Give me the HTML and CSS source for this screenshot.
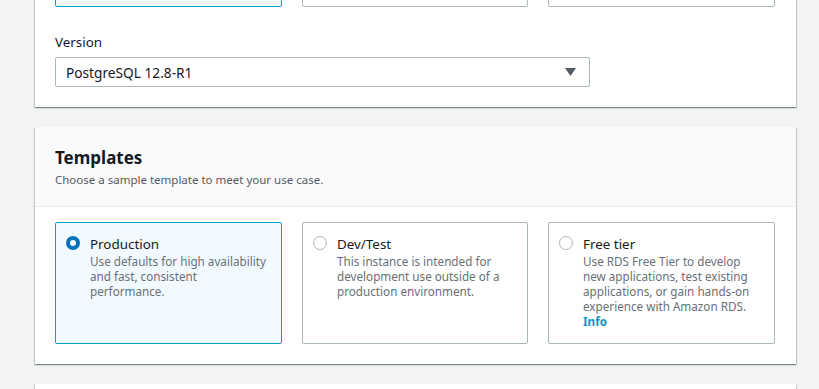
FILE: index.html
```html
<!DOCTYPE html>
<html>
<head>
<meta charset="utf-8">
<link rel="stylesheet" href="styles.css">
</head>
<body>
<div class="page">
  <section class="panel panel-top">
    <div class="tiles">
      <div class="tile selected"></div>
      <div class="tile"></div>
      <div class="tile"></div>
    </div>
    <label class="field-label">Version</label>
    <div class="select">
      <span>PostgreSQL 12.8-R1</span>
      <svg class="caret" width="11" height="8" viewBox="0 0 11 8"><path d="M0 0 H11 L5.5 8 Z" fill="#545b64"/></svg>
    </div>
  </section>

  <section class="panel">
    <header class="panel-header">
      <h2>Templates</h2>
      <p>Choose a sample template to meet your use case.</p>
    </header>
    <div class="panel-body">
      <div class="tiles">
        <div class="tile selected option">
          <span class="radio checked"></span>
          <div class="option-text">
            <div class="option-title">Production</div>
            <div class="option-desc">Use defaults for high availability and fast, consistent performance.</div>
          </div>
        </div>
        <div class="tile option">
          <span class="radio"></span>
          <div class="option-text">
            <div class="option-title">Dev/Test</div>
            <div class="option-desc">This instance is intended for development use outside of a production environment.</div>
          </div>
        </div>
        <div class="tile option">
          <span class="radio"></span>
          <div class="option-text">
            <div class="option-title">Free tier</div>
            <div class="option-desc">Use RDS Free Tier to develop new applications, test existing applications, or gain hands-on experience with Amazon RDS. <a class="info">Info</a></div>
          </div>
        </div>
      </div>
    </div>
  </section>

  <section class="panel panel-next"></section>
</div>
</body>
</html>
```

FILE: styles.css
```css
* { box-sizing: border-box; }
html, body { margin: 0; padding: 0; }
body {
  background: #f2f3f3;
  font-family: "Noto Sans", "Open Sans", Arial, sans-serif;
  color: #16191f;
  overflow: hidden;
  height: 389px;
}
.page {
  width: 761px;
  margin-left: 35px;
  display: flex;
  flex-direction: column;
  gap: 20px;
}
.panel {
  background: #fff;
  box-shadow: 0 1px 1px 0 rgba(0,28,36,.3), 1px 1px 1px 0 rgba(0,28,36,.15), -1px 1px 1px 0 rgba(0,28,36,.15);
}
.panel-top {
  margin-top: -113px;
  padding: 0 21px 20px 20px;
}
.tiles {
  display: grid;
  grid-template-columns: 227px 226px 227px;
  column-gap: 20px;
  justify-content: space-between;
}
.panel-top .tiles .tile { height: 120px; }
.tile {
  border: 1px solid #aab7b8;
  border-radius: 2px;
  background: #fff;
}
.tile.selected {
  border-color: #00a1c9;
  background: #f1faff;
}
.field-label {
  display: block;
  margin-top: 25px;
  font-size: 13.4px;
  line-height: 20px;
  color: #16191f;
}
.select {
  margin-top: 5px;
  width: 535px;
  height: 30px;
  border: 1px solid #aab7b8;
  border-radius: 2px;
  display: flex;
  align-items: center;
  justify-content: space-between;
  padding: 0 13px 0 10px;
  font-size: 13.7px;
}
.caret { display: block; }
.panel-header {
  background: #fafafa;
  border-bottom: 1px solid #eaeded;
  padding: 19px 20px 18px;
}
.panel-header h2 {
  margin: 0;
  font-size: 17px;
  line-height: 24px;
  font-weight: 700;
}
.panel-header p {
  margin: 1px 0 0;
  font-size: 11.5px;
  line-height: 17px;
  color: #545b64;
}
.panel-body {
  padding: 15px 21px 20px 20px;
}
.option {
  display: flex;
  align-items: flex-start;
  gap: 10px;
  padding: 11px 8px 14px 10px;
}
.radio {
  flex: none;
  width: 14px;
  height: 14px;
  margin-top: 2px;
  border-radius: 50%;
  border: 1px solid #aab7b8;
  background: #fff;
}
.radio.checked {
  border: 4px solid #0073bb;
}
.option-title {
  font-size: 13.4px;
  line-height: 20px;
  color: #16191f;
}
.option-desc {
  font-size: 11.7px;
  line-height: 15px;
  color: #687078;
}
.info {
  color: #0f93c3;
  font-weight: 700;
}
.panel-next { height: 40px; }
```
